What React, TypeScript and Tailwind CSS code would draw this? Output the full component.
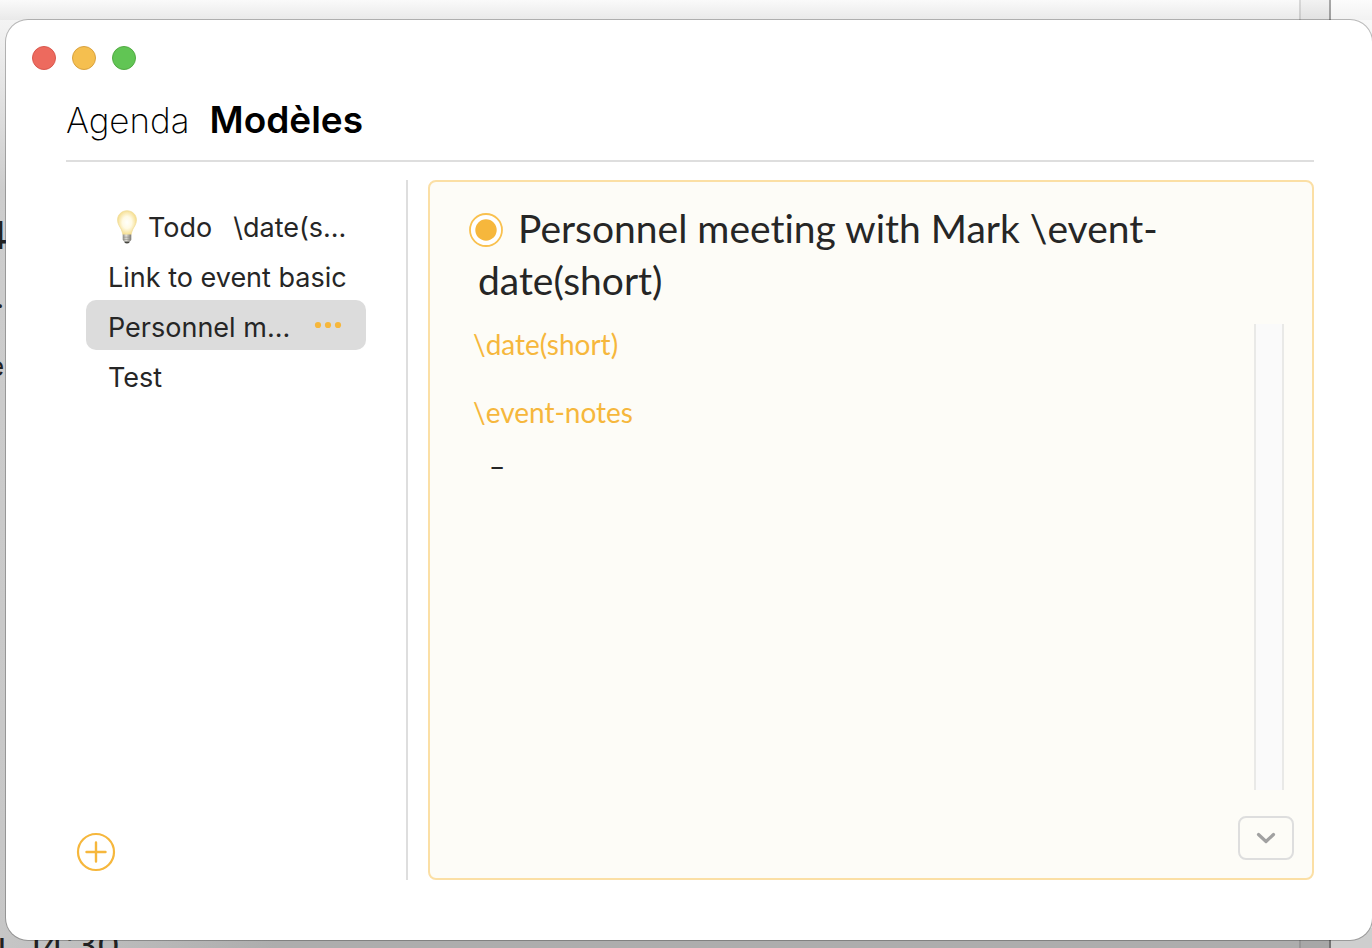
import React from "react";

type Template = { id: string; label: string; bulb?: boolean; extra?: string };

const templates: Template[] = [
  { id: "todo", label: "Todo", bulb: true, extra: "\\date(s..." },
  { id: "link", label: "Link to event basic" },
  { id: "personnel", label: "Personnel m..." },
  { id: "test", label: "Test" },
];

function BulbIcon() {
  return (
    <svg viewBox="0 0 20 34" className="h-[34px] w-5 shrink-0" aria-hidden="true">
      <defs>
        <radialGradient id="bulb-glass" cx="50%" cy="48%" r="55%">
          <stop offset="0" stopColor="#fffffb" />
          <stop offset="0.45" stopColor="#fffae4" />
          <stop offset="1" stopColor="#f4da82" />
        </radialGradient>
        <linearGradient id="bulb-base" x1="0" x2="1">
          <stop offset="0" stopColor="#8c8a83" />
          <stop offset="0.4" stopColor="#e4e2dc" />
          <stop offset="1" stopColor="#77756f" />
        </linearGradient>
      </defs>
      <path
        d="M10 .8C4.500.8.6 4.800.6 10c0 4.200 2.200 6.400 3.600 9.200 1 2 1.200 3.900 1.900 5.800h7.800c.7-1.900.9-3.800 1.900-5.800 1.400-2.800 3.600-5 3.600-9.200C19.400 4.800 15.500.8 10 .8z"
        fill="url(#bulb-glass)"
        stroke="#f0dc98"
        strokeWidth=".8"
      />
      <path d="M5.700 24.600h8.600v5c0 .8-.7 1.500-1.500 2H7.200c-.800-.500-1.500-1.200-1.500-2z" fill="url(#bulb-base)" />
      <path d="M6 27.200h8M6 29.400h8" stroke="#8d8b85" strokeWidth=".6" />
      <path d="M7.300 31.400h5.400c0 1.200-1 2-2.700 2s-2.700-.8-2.700-2z" fill="#45443f" />
    </svg>
  );
}

function Backdrop() {
  return (
    <div
      aria-hidden="true"
      className="absolute inset-0 overflow-hidden bg-linear-to-b from-[#f8f8f8] from-0% via-[#cdcdcd] via-20% to-[#c6c6c6] font-['Inter','Liberation_Sans',sans-serif] text-[#222]"
    >
      <div className="absolute inset-x-0 top-0 h-5 bg-linear-to-b from-[#fafafa] to-[#e9e9e9]" />
      <div className="absolute inset-x-0 bottom-0 h-5 bg-linear-to-r from-[#c6c6c6] to-[#adadad] to-20%" />
      <div className="absolute inset-y-0 right-[41px] w-[32px] border-l-2 border-r-2 border-l-black/10 border-r-black/30 bg-black/3" />
      <div className="absolute inset-y-0 right-0 w-[41px] bg-white/40" />
      <span className="absolute -left-[17px] top-[215px] text-[38px] leading-10 font-medium">4</span>
      <span className="absolute -left-1 top-[282px] text-[28px] leading-8">.</span>
      <span className="absolute -left-[11px] top-[351px] text-[26px] leading-8">e</span>
      <span className="absolute -left-[15px] bottom-[-17px] text-[36px] leading-10 whitespace-pre">u  14:30</span>
    </div>
  );
}

function Sidebar() {
  return (
    <aside className="flex w-[342px] shrink-0 flex-col justify-between border-r-2 border-[#dedede] pt-5 pr-10 pb-2 pl-5">
      <ul>
        {templates.map((t) => {
          const selected = t.id === "personnel";
          return (
            <li
              key={t.id}
              className={
                selected
                  ? "flex h-[50px] items-center rounded-[10px] bg-[#dcdcdc] pr-6 pl-[22px]"
                  : "flex h-[50px] items-center pl-[22px]"
              }
            >
              <button type="button" className="flex flex-1 items-center pt-1.5 text-left text-[27px] leading-8 whitespace-nowrap">
                {t.bulb && (
                  <span className="mr-[11px] ml-[9px] flex h-8 items-center pb-0.5">
                    <BulbIcon />
                  </span>
                )}
                {t.label}
                {t.extra && <span className="ml-[21px]">{t.extra}</span>}
              </button>
              {selected && (
                <button type="button" aria-label="Options">
                  <svg viewBox="0 0 28 8" className="h-2 w-7 fill-[#f6b73c]">
                    <circle cx="4" cy="4" r="3.100" />
                    <circle cx="14" cy="4" r="3.100" />
                    <circle cx="24" cy="4" r="3.100" />
                  </svg>
                </button>
              )}
            </li>
          );
        })}
      </ul>
      <button type="button" aria-label="Ajouter" className="-ml-2.5 size-10">
        <svg viewBox="0 0 40 40" className="size-10" fill="none" stroke="#f6b73c" strokeLinecap="round">
          <circle cx="20" cy="20" r="18" strokeWidth="2.200" />
          <path d="M20 10.500v19M10.500 20h19" strokeWidth="2.400" />
        </svg>
      </button>
    </aside>
  );
}

function Editor() {
  return (
    <main className="ml-5 flex min-w-0 flex-1 flex-col rounded-lg border-2 border-[#fbdfa5] bg-[#fdfcf7] pt-5 pr-[18px] pb-[18px] font-['Lato','Open_Sans',sans-serif] [font-variant-ligatures:none]">
      <h2 className="pl-12 text-[39px] leading-[52px]">
        <button type="button" aria-label="Au programme" className="-ml-[9px] mr-[15px] inline-block align-[-4px]">
          <svg viewBox="0 0 34 34" className="size-[34px]">
            <circle cx="17" cy="17" r="16" fill="#fff" stroke="#f9c14f" strokeWidth="1.800" />
            <circle cx="17" cy="17" r="10.700" fill="#f6b73c" />
          </svg>
        </button>
        Personnel meeting with Mark \event-date(short)
      </h2>
      <div className="mt-[18px] mr-2.5 flex flex-1 pl-[43px]">
        <div className="flex-1 pt-[3px] text-[28px] leading-[34px]">
          <p className="text-[#f6b73c]">\date(short)</p>
          <p className="mt-[34px] text-[#f6b73c]">\event-notes</p>
          <p className="mt-5 pl-4">–</p>
        </div>
        <div className="w-[30px] border-r-2 border-l-2 border-[#e9e9e7] bg-[#fafafa]" />
      </div>
      <button
        type="button"
        aria-label="Afficher plus"
        className="mt-[26px] flex h-11 w-14 items-center justify-center self-end rounded-lg border-2 border-[#dedede]"
      >
        <svg viewBox="0 0 20 12" className="h-3 w-5" fill="none" stroke="#a1a1a1" strokeWidth="3.200" strokeLinecap="round" strokeLinejoin="round">
          <path d="M2.500 2.500 10 9.500l7.500-7" />
        </svg>
      </button>
    </main>
  );
}

export default function App() {
  return (
    <div className="relative flex min-h-screen flex-col pt-5 pb-2 pl-1.5 font-['Inter','Liberation_Sans',sans-serif] text-[#262626]">
      <Backdrop />
      <div className="relative flex flex-1 flex-col rounded-[22px] bg-white pt-[26px] pr-[58px] pb-[60px] shadow-[0_0_0_1px_rgba(0,0,0,0.25)]">
        <div className="flex gap-4 pl-[26px]">
          <button type="button" aria-label="Fermer" className="size-6 rounded-full border border-[#d9584e] bg-[#ed6a5e]" />
          <button type="button" aria-label="Réduire" className="size-6 rounded-full border border-[#d9a23f] bg-[#f5bf4f]" />
          <button type="button" aria-label="Agrandir" className="size-6 rounded-full border border-[#52ab43] bg-[#61c554]" />
        </div>
        <header className="ml-[60px] flex h-[92px] items-baseline gap-5 border-b-2 border-[#dedede] pt-[26px] leading-[48px] text-black">
          <a href="#agenda" className="text-[35px] font-extralight">Agenda</a>
          <h1 className="text-[37px] font-semibold">Modèles</h1>
        </header>
        <div className="mt-[18px] ml-[60px] flex flex-1">
          <Sidebar />
          <Editor />
        </div>
      </div>
    </div>
  );
}
